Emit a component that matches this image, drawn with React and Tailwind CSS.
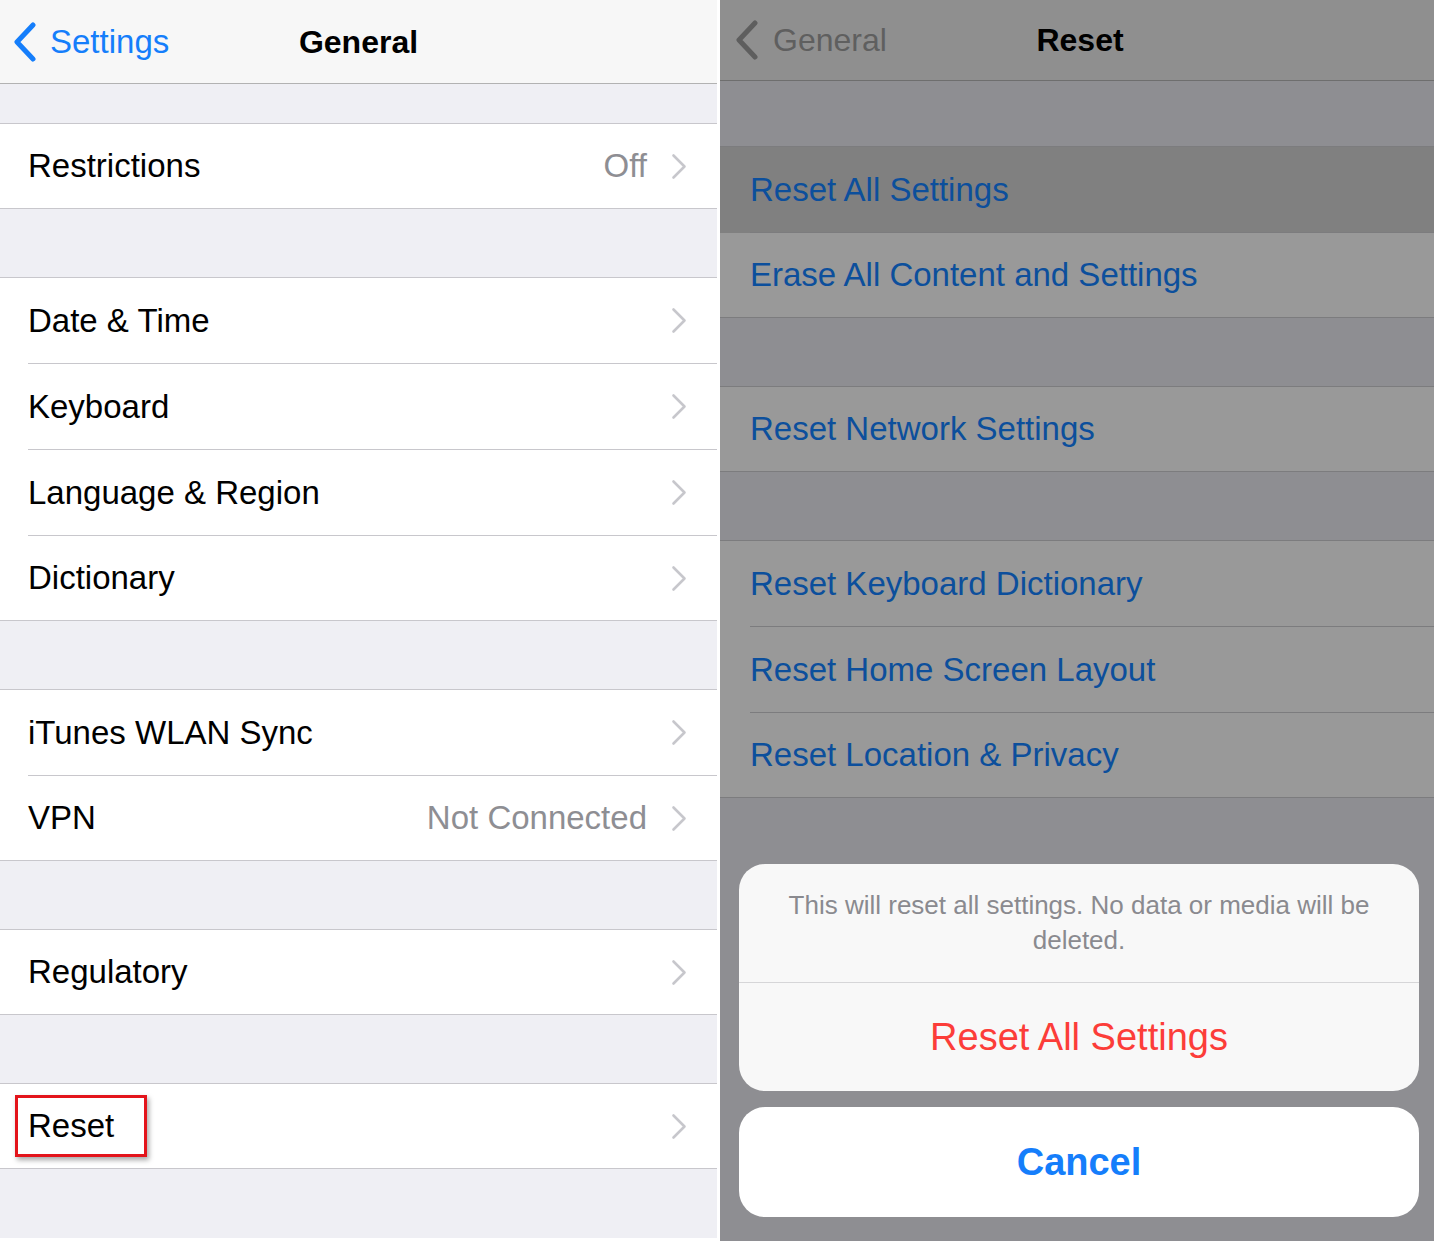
const FONT = { fontFamily: '"Liberation Sans", Arial, sans-serif' };

function Chevron({ className = '' }) {
  return (
    <svg width="16" height="27" viewBox="0 0 16 27" className={className}>
      <path d="M2.5 2.5 L13.5 13.5 L2.5 24.5" fill="none" stroke="currentColor" strokeWidth="2.6" strokeLinecap="round" strokeLinejoin="round" />
    </svg>
  );
}

function BackChevron({ className = '' }) {
  return (
    <svg width="26" height="40" viewBox="0 0 26 40" className={className}>
      <path d="M21 3 L5 20 L21 37" fill="none" stroke="currentColor" strokeWidth="5" strokeLinecap="round" strokeLinejoin="round" />
    </svg>
  );
}

function Row({ label, value, last, marked }) {
  return (
    <div className={`relative flex items-center bg-white pl-[28px] ${last ? 'h-[84px]' : 'h-[86px]'}`}>
      <div className={`flex h-full flex-1 items-center pr-[30px] ${last ? '' : 'border-b border-[#c8c7cc]'}`}>
        <span className="relative flex-1 text-[33px] text-black">
          {label}
          {marked && (
            <span className="absolute left-[-13px] top-[-6px] h-[62px] w-[132px] border-[3px] border-[#e3141b] shadow-[2px_3px_5px_rgba(0,0,0,0.35)]" />
          )}
        </span>
        {value && <span className="mr-[24px] text-[33px] text-[#8e8e93]">{value}</span>}
        <Chevron className="text-[#c7c7cc]" />
      </div>
    </div>
  );
}

function Group({ rows }) {
  return (
    <div className="border-y border-[#c8c7cc]">
      {rows.map((r, i) => (
        <Row key={r.label} {...r} last={i === rows.length - 1} />
      ))}
    </div>
  );
}

function DimRow({ label, last, pressed }) {
  return (
    <div className={`flex items-center pl-[30px] ${last ? 'h-[84px]' : 'h-[86px]'} ${pressed ? 'bg-[#808080]' : 'bg-[#999999]'}`}>
      <div className={`flex h-full flex-1 items-center ${last ? '' : 'border-b border-[#7c7c7e]'}`}>
        <span className="text-[33px] text-[#0c4f9c]">{label}</span>
      </div>
    </div>
  );
}

function DimGroup({ rows }) {
  return (
    <div className="border-y border-[#7c7c7e]">
      {rows.map((r, i) => (
        <DimRow key={r.label} {...r} last={i === rows.length - 1} />
      ))}
    </div>
  );
}

const leftGroups = [
  [{ label: 'Restrictions', value: 'Off' }],
  [{ label: 'Date & Time' }, { label: 'Keyboard' }, { label: 'Language & Region' }, { label: 'Dictionary' }],
  [{ label: 'iTunes WLAN Sync' }, { label: 'VPN', value: 'Not Connected' }],
  [{ label: 'Regulatory' }],
  [{ label: 'Reset', marked: true }],
];

const rightGroups = [
  [{ label: 'Reset All Settings', pressed: true }, { label: 'Erase All Content and Settings' }],
  [{ label: 'Reset Network Settings' }],
  [{ label: 'Reset Keyboard Dictionary' }, { label: 'Reset Home Screen Layout' }, { label: 'Reset Location & Privacy' }],
];

export default function App() {
  return (
    <div className="flex h-[1241px] w-[1434px] overflow-hidden bg-white" style={FONT}>
      {/* left: General */}
      <div className="flex h-[1238px] w-[717px] flex-col bg-[#efeff4]">
        <div className="relative flex h-[84px] shrink-0 items-center border-b border-[#b2b2b2] bg-[#f7f7f7] pl-[12px]">
          <BackChevron className="text-[#157efb]" />
          <span className="ml-[12px] text-[33px] text-[#157efb]">Settings</span>
          <span className="absolute inset-x-0 text-center text-[32px] font-bold text-black">General</span>
        </div>
        <div className="flex flex-col gap-[68px] pt-[39px]">
          {leftGroups.map((g, i) => (
            <Group key={i} rows={g} />
          ))}
        </div>
      </div>

      <div className="w-[3px] shrink-0 bg-white" />

      {/* right: Reset with action sheet */}
      <div className="flex h-full w-[714px] flex-col bg-[#8e8e92]">
        <div className="relative flex h-[81px] shrink-0 items-center border-b border-[#6e6e6e] bg-[#8f8f8f] pl-[14px]">
          <BackChevron className="text-[#5e5e5e]" />
          <span className="ml-[13px] text-[32px] text-[#5f5f5f]">General</span>
          <span className="absolute inset-x-0 pl-[6px] text-center text-[32px] font-bold text-black">Reset</span>
        </div>
        <div className="flex flex-col gap-[68px] pt-[65px]">
          {rightGroups.map((g, i) => (
            <DimGroup key={i} rows={g} />
          ))}
        </div>
        <div className="flex flex-1 flex-col justify-end gap-[16px] pb-[24px] pl-[19px] pr-[15px]">
          <div className="overflow-hidden rounded-[26px] bg-[#f8f8f8]">
            <div className="flex h-[119px] items-center justify-center border-b border-[#d6d6d8] px-[20px] text-center text-[26px] leading-[35px] text-[#8a8a8f]">
              <p>
                This will reset all settings. No data or media will be
                <br />
                deleted.
              </p>
            </div>
            <div className="flex h-[108px] items-center justify-center text-[38px] text-[#fc3d39]">Reset All Settings</div>
          </div>
          <div className="flex h-[110px] items-center justify-center rounded-[26px] bg-white text-[38px] font-bold text-[#157efb]">
            Cancel
          </div>
        </div>
      </div>
    </div>
  );
}
